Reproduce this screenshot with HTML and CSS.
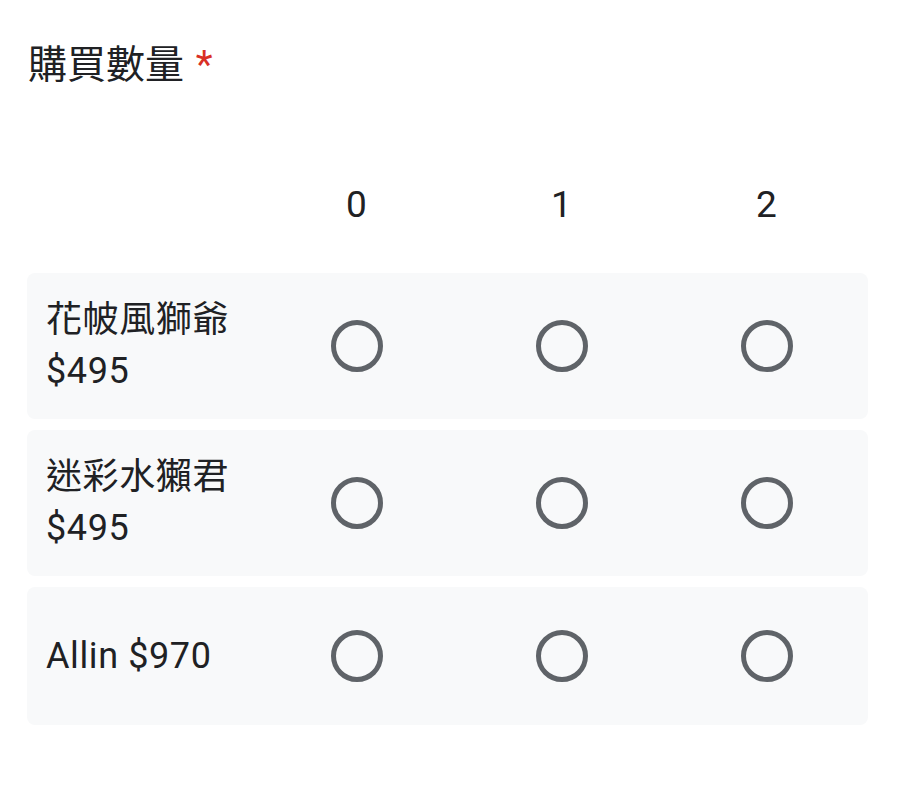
FILE: index.html
```html
<!DOCTYPE html>
<html>
<head>
    <title>購買數量</title>
    <link rel="stylesheet" href="styles.css">
</head>
<body>
    <div class="question">
        <div class="question-title">購買數量 <span class="required">*</span></div>

        <div class="grid-header">
            <div class="row-label"></div>
            <div class="col-label">0</div>
            <div class="col-label">1</div>
            <div class="col-label">2</div>
        </div>

        <div class="grid-row">
            <div class="row-label">花帔風獅爺 $495</div>
            <div class="cell"><span class="radio"></span></div>
            <div class="cell"><span class="radio"></span></div>
            <div class="cell"><span class="radio"></span></div>
        </div>

        <div class="grid-row">
            <div class="row-label">迷彩水獺君 $495</div>
            <div class="cell"><span class="radio"></span></div>
            <div class="cell"><span class="radio"></span></div>
            <div class="cell"><span class="radio"></span></div>
        </div>

        <div class="grid-row">
            <div class="row-label">Allin $970</div>
            <div class="cell"><span class="radio"></span></div>
            <div class="cell"><span class="radio"></span></div>
            <div class="cell"><span class="radio"></span></div>
        </div>
    </div>
</body>
</html>
```

FILE: styles.css
```css
body {
    margin: 0;
    background: #fff;
    color: #202124;
    font-family: Roboto, "Noto Sans CJK TC", sans-serif;
}
.question {
    padding: 40px 38px 0 27px;
}
.question-title {
    font-size: 39px;
    line-height: 50px;
    padding-left: 1px;
}
.required {
    color: #d93025;
    margin-left: 2px;
}
.grid-header,
.grid-row {
    display: grid;
    grid-template-columns: 226px repeat(3, 1fr);
    align-items: center;
}
.grid-header {
    margin-top: 90px;
    margin-bottom: 43px;
}
.col-label {
    text-align: center;
    font-size: 37px;
    line-height: 50px;
    padding-left: 2px;
}
.grid-row {
    background: #f8f9fa;
    border-radius: 8px;
    min-height: 138px;
    margin-bottom: 11px;
    box-sizing: border-box;
}
.grid-row .row-label {
    padding: 22px 8px 22px 19px;
    font-size: 36px;
    line-height: 51px;
    letter-spacing: 0.6px;
}
.cell {
    display: flex;
    justify-content: center;
}
.radio {
    width: 52px;
    height: 52px;
    border: 5px solid #5f6368;
    border-radius: 50%;
    box-sizing: border-box;
    margin-left: 2px;
}
```
